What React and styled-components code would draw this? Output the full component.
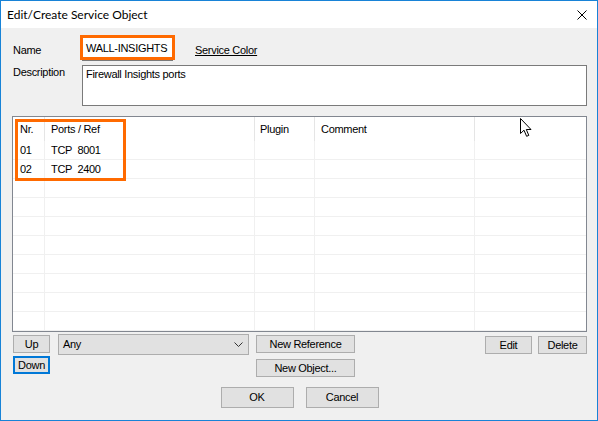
import React from 'react';
import styled, { createGlobalStyle } from 'styled-components';

const GlobalStyle = createGlobalStyle`
  html, body {
    margin: 0;
    padding: 0;
    background: #ffffff;
  }
  body {
    font-family: "Liberation Sans", Arial, sans-serif;
    font-size: 11px;
    letter-spacing: -0.3px;
    color: #000;
  }
`;

const columns = [
  { key: 'nr', title: 'Nr.', width: 32, pad: 7 },
  { key: 'ports', title: 'Ports / Ref', width: 210, pad: 6 },
  { key: 'plugin', title: 'Plugin', width: 60, pad: 5 },
  { key: 'comment', title: 'Comment', width: 160, pad: 6 },
  { key: 'extra', title: '', width: 111, pad: 6 },
];

const rows = [
  { nr: '01', ports: 'TCP  8001' },
  { nr: '02', ports: 'TCP  2400' },
  {}, {}, {}, {}, {}, {}, {}, {},
];

export default function App() {
  return (
    <>
      <GlobalStyle />
      <Window>
        <TitleBar>
          <Title>Edit/Create Service Object</Title>
          <CloseIcon width="10" height="10" viewBox="0 0 10 10">
            <path d="M0.5 0.5 L9.5 9.5 M9.5 0.5 L0.5 9.5" stroke="#000" strokeWidth="1" />
          </CloseIcon>
        </TitleBar>

        <Body>
          <FieldRow>
            <Label>Name</Label>
            <NameWrap>
              <TextBox>WALL-INSIGHTS</TextBox>
              <Highlight $left={-2} $top={-2} $width={95} $height={25} />
            </NameWrap>
            <LinkText>Service Color</LinkText>
          </FieldRow>

          <FieldRow $gap={4}>
            <Label $top={1}>Description</Label>
            <TextArea>Firewall Insights ports</TextArea>
          </FieldRow>

          <GridWrap>
            <HeaderRow>
              {columns.map(col => (
                <HeaderCell key={col.key} $width={col.width} $pad={col.pad}>
                  {col.title}
                </HeaderCell>
              ))}
            </HeaderRow>
            {rows.map((row, i) => (
              <Row key={i}>
                {columns.map(col => (
                  <Cell key={col.key} $width={col.width} $pad={col.pad}>
                    {row[col.key] || ''}
                  </Cell>
                ))}
              </Row>
            ))}
            <Highlight $left={2} $top={2} $width={111} $height={62} />
            <Cursor width="13" height="20" viewBox="0 0 13 20">
              <path
                d="M0.5 0.5 L0.5 15.5 L4 12.2 L6.6 18.3 L8.8 17.4 L6.3 11.5 L11 11.5 Z"
                fill="#fff"
                stroke="#000"
                strokeWidth="1"
                strokeLinejoin="miter"
              />
            </Cursor>
          </GridWrap>

          <Controls>
            <StackCol>
              <Button $width={37}>Up</Button>
              <Button $width={37} $focused>Down</Button>
            </StackCol>
            <Combo>
              <span>Any</span>
              <svg width="9" height="5" viewBox="0 0 9 5">
                <path d="M0.5 0.5 L4.5 4.5 L8.5 0.5" fill="none" stroke="#333" strokeWidth="1" />
              </svg>
            </Combo>
            <StackCol $gap={6}>
              <Button $width={99}>New Reference</Button>
              <Button $width={99}>New Object...</Button>
            </StackCol>
            <RightGroup>
              <Button $width={47}>Edit</Button>
              <Button $width={49}>Delete</Button>
            </RightGroup>
          </Controls>

          <DialogButtons>
            <Button $width={73} $height={21}>OK</Button>
            <Button $width={73} $height={21}>Cancel</Button>
          </DialogButtons>
        </Body>
      </Window>
    </>
  );
}

const Window = styled.div`
  width: 598px;
  height: 421px;
  box-sizing: border-box;
  border: 1px solid #1883d7;
  background: #f0f0f0;
  display: flex;
  flex-direction: column;
  overflow: hidden;
`;

const TitleBar = styled.div`
  height: 27px;
  background: #fff;
  display: flex;
  align-items: center;
  justify-content: space-between;
  padding: 0 10px 0 6px;
  flex-shrink: 0;
`;

const Title = styled.div`
  font-family: "Segoe UI", Lato, "Liberation Sans", sans-serif;
  font-size: 12px;
  letter-spacing: 0;
  color: #000;
`;

const CloseIcon = styled.svg`
  display: block;
`;

const Body = styled.div`
  padding: 0 10px 0 11px;
  display: flex;
  flex-direction: column;
`;

const FieldRow = styled.div`
  display: flex;
  align-items: flex-start;
  margin-top: ${props => (props.$gap !== undefined ? props.$gap : 9)}px;
`;

const Label = styled.div`
  width: 69px;
  padding-left: 1px;
  line-height: 13px;
  margin-top: ${props => (props.$top !== undefined ? props.$top : 7)}px;
  flex-shrink: 0;
`;

const NameWrap = styled.div`
  position: relative;
`;

const TextBox = styled.div`
  width: 91px;
  height: 24px;
  box-sizing: border-box;
  border: 1px solid #7a7a7a;
  background: #fff;
  padding: 4px 3px;
  line-height: 13px;
  white-space: nowrap;
`;

const TextArea = styled.div`
  flex: 1;
  height: 41px;
  box-sizing: border-box;
  border: 1px solid #7a7a7a;
  background: #fff;
  padding: 2px 3px;
  line-height: 13px;
`;

const LinkText = styled.div`
  margin-left: 22px;
  margin-top: 7px;
  line-height: 13px;
  text-decoration: underline;
`;

const Highlight = styled.div`
  position: absolute;
  left: ${props => props.$left}px;
  top: ${props => props.$top}px;
  width: ${props => props.$width}px;
  height: ${props => props.$height}px;
  box-sizing: border-box;
  border: 3px solid #ff6a00;
  pointer-events: none;
`;

const GridWrap = styled.div`
  position: relative;
  margin-top: 10px;
  height: 216px;
  box-sizing: border-box;
  border: 1px solid #828790;
  background: #fff;
  overflow: hidden;
`;

const HeaderRow = styled.div`
  display: flex;
  height: 24px;
`;

const HeaderCell = styled.div`
  width: ${props => props.$width}px;
  box-sizing: border-box;
  padding-left: ${props => props.$pad}px;
  border-right: 1px solid #e5e5e5;
  display: flex;
  align-items: center;
  line-height: 13px;
  &:last-child {
    border-right: none;
  }
`;

const Row = styled.div`
  display: flex;
  height: 19px;
  box-sizing: border-box;
  border-bottom: 1px solid #f0f0f0;
`;

const Cell = styled.div`
  width: ${props => props.$width}px;
  box-sizing: border-box;
  padding-left: ${props => props.$pad}px;
  border-right: 1px solid #f0f0f0;
  display: flex;
  align-items: center;
  white-space: pre;
  line-height: 13px;
  &:last-child {
    border-right: none;
  }
`;

const Cursor = styled.svg`
  position: absolute;
  left: 507px;
  top: 1px;
`;

const Controls = styled.div`
  display: flex;
  align-items: flex-start;
  margin-top: 2px;
`;

const StackCol = styled.div`
  display: flex;
  flex-direction: column;
  gap: ${props => (props.$gap !== undefined ? props.$gap : 3)}px;
  margin-top: 1px;
  margin-left: 1px;
  & + * {
    margin-left: 8px;
  }
`;

const Button = styled.div`
  width: ${props => props.$width}px;
  height: ${props => props.$height || 18}px;
  box-sizing: border-box;
  background: #e1e1e1;
  border: ${props => (props.$focused ? '2px solid #0078d7' : '1px solid #adadad')};
  display: flex;
  align-items: center;
  justify-content: center;
  line-height: 13px;
  white-space: nowrap;
`;

const Combo = styled.div`
  width: 191px;
  height: 21px;
  box-sizing: border-box;
  background: #e1e1e1;
  border: 1px solid #adadad;
  display: flex;
  align-items: center;
  justify-content: space-between;
  padding: 0 5px 0 4px;
  line-height: 13px;
  & + * {
    margin-left: 7px;
  }
  svg {
    display: block;
  }
`;

const RightGroup = styled.div`
  display: flex;
  gap: 6px;
  margin-left: auto;
  margin-top: 2px;
`;

const DialogButtons = styled.div`
  display: flex;
  justify-content: center;
  gap: 12px;
  margin-top: 10px;
`;
